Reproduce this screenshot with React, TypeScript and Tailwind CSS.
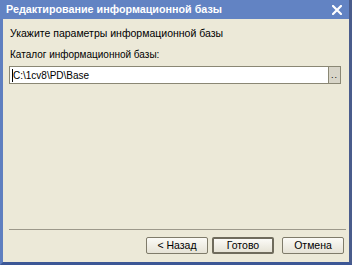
import React from 'react';

const font = { fontFamily: '"Liberation Sans", Arial, sans-serif' };

const WizardButton = ({ label, primary }: { label: string; primary?: boolean }) => (
  <button
    className={`w-[62px] h-[17px] flex items-center justify-center text-[10.5px] leading-none text-black rounded-[2px] bg-gradient-to-b from-[#fbfaf6] to-[#e6e3d6] ${
      primary ? 'border-2 border-[#6f6b5c]' : 'border border-[#7f7b6a]'
    }`}
  >
    {label}
  </button>
);

export default function App() {
  return (
    <div className="w-[352px] h-[265px] flex flex-col select-none" style={font}>
      <div className="h-[19px] flex items-center justify-between bg-[#6283c3] pl-[6px] pr-[6px] border-r-[3px] border-r-[#4a5c8c]">
        <span className="text-white font-bold text-[10.75px] leading-none">Редактирование информационной базы</span>
        <svg width="10" height="10" viewBox="0 0 10 10" className="mr-[1px]">
          <path d="M1 1 L9 9 M9 1 L1 9" stroke="white" strokeWidth="2.2" strokeLinecap="square" />
        </svg>
      </div>
      <div className="flex-1 flex flex-col bg-[#ece9d8] border-l-[3px] border-l-[#5f7fc0] border-r-[3px] border-r-[#4a5c8c] border-b-[3px] border-b-[#3c5796]">
        <div className="pl-[7px] pt-[8px] text-[10.5px] leading-[13px] text-black">Укажите параметры информационной базы</div>
        <div className="pl-[7px] pt-[8px] text-[10px] leading-[13px] text-black">Каталог информационной базы:</div>
        <div className="flex ml-[6px] mr-[8px] mt-[5px] h-[18px] border border-[#8a8774]">
          <div className="flex-1 flex items-center bg-white pl-[2px] text-[10px] text-black">
            <span className="border-l border-black h-[13px] flex items-center">C:\1cv8\PD\Base</span>
          </div>
          <div className="w-[12px] bg-[#d8d5c8] border-l border-[#8a8774] flex items-end justify-center pb-[3px]">
            <span className="text-[9px] leading-none text-black tracking-[1px]">..</span>
          </div>
        </div>
        <div className="flex-1" />
        <div className="ml-[6px] mr-[3px] border-t border-[#9c988a]" />
        <div className="flex justify-end pr-[5px] pt-[7px] pb-[8px]">
          <div className="flex gap-[4px]">
            <WizardButton label="< Назад" />
            <WizardButton label="Готово" primary />
          </div>
          <div className="ml-[8px]">
            <WizardButton label="Отмена" />
          </div>
        </div>
      </div>
    </div>
  );
}
